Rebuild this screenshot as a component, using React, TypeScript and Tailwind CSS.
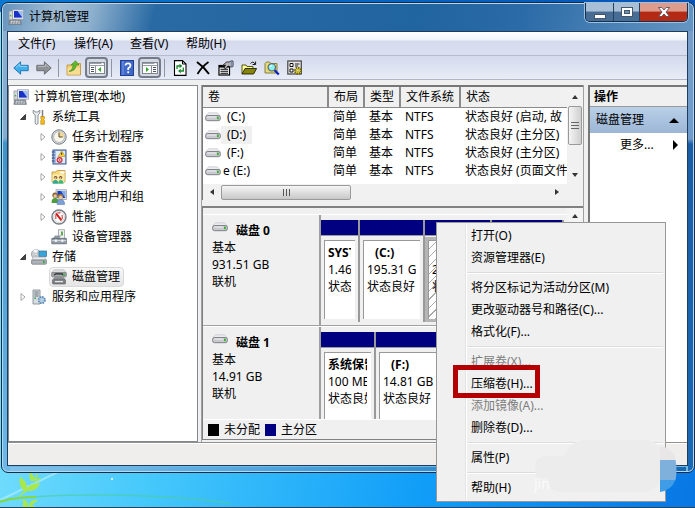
import React from "react";

const ICON = "h-4 w-4 shrink-0";

function ComputerIcon() {
  return (
    <svg viewBox="0 0 16 16" className={ICON} aria-hidden="true">
      <rect x="1" y="2" width="4" height="9" fill="#d3d6d9" stroke="#8a9098" strokeWidth=".7" />
      <rect x="1.8" y="6" width="1.4" height="1.4" fill="#3fae3f" />
      <rect x="4.5" y=".8" width="11" height="9.4" fill="#e9ecef" stroke="#8e98a6" strokeWidth=".7" />
      <rect x="6" y="2" width="8.2" height="6.6" fill="#1830c8" />
      <path d="M9.5 2h4.7v6.600z" fill="#9cc0f6" />
      <path d="M8 10h4.500l1 1.200h-6z" fill="#a7adb5" />
      <path d="M1.500 11h11l1 4.400H.8z" fill="#8b9299" stroke="#646c74" strokeWidth=".5" />
      <path d="M3 12.300h8.500M2.500 14h10" stroke="#e4e7ea" strokeDasharray="1.600 1" />
    </svg>
  );
}
function ToolsIcon() {
  return (
    <svg viewBox="0 0 16 16" className={ICON} aria-hidden="true">
      <path d="M2.2 1v3.2l2 1.6V14q0 1.4 1.4 1.4T7 14V5.8l1.8-1.6V1L7 3H4.2z" fill="#eceff1" stroke="#80878d" strokeWidth=".9" />
      <path d="M11.5 1v7" stroke="#7b8187" strokeWidth="1.5" />
      <path d="M9.8 7.5h3.6v2l-.7 1 .7 1v3.8H9.8v-3.8l.7-1-.7-1z" fill="#f5bc1c" stroke="#b57b09" strokeWidth=".6" />
    </svg>
  );
}
function ClockIcon() {
  return (
    <svg viewBox="0 0 16 16" className={ICON} aria-hidden="true">
      <circle cx="8" cy="8" r="7.2" fill="#d5d8dc" stroke="#777f88" />
      <circle cx="8" cy="8" r="5.4" fill="#f8f6ea" stroke="#a3a8ae" strokeWidth=".7" />
      <path d="M8 8V2.6A5.4 5.4 0 0 1 13.4 8z" fill="#f0d89b" />
      <path d="M8 3.5V8h3.7" fill="none" stroke="#5a4a28" />
    </svg>
  );
}
function EventIcon() {
  return (
    <svg viewBox="0 0 16 16" className={ICON} aria-hidden="true">
      <rect x="2" y="1" width="13" height="14" fill="#a9bfe2" stroke="#3c5c98" />
      <rect x="5" y="2" width="9" height="12" fill="#e3ebf8" />
      <path d="M.8 3h3M.8 6h3M.8 9h3M.8 12h3" stroke="#34487c" strokeWidth="1.2" />
      <path d="M10.7 1.7l3.5 5.8h-7z" fill="#ffd52e" stroke="#a08010" strokeWidth=".5" />
      <path d="M10.7 3.6v2.2" stroke="#222" />
      <circle cx="8.6" cy="11" r="3" fill="#d7303c" />
      <circle cx="8.6" cy="11" r="1.200" fill="none" stroke="#fff" strokeWidth=".8" />
    </svg>
  );
}
function SharedIcon() {
  return (
    <svg viewBox="0 0 16 16" className={ICON} aria-hidden="true">
      <path d="M1 13V3h4l1-1.5h8V13z" fill="#f5d97c" stroke="#bb9436" strokeWidth=".8" />
      <path d="M9 2.5h4.5v2H9z" fill="#fff" />
      <path d="M1.5 5.5h12V13h-12z" fill="#fbe9a5" />
      <circle cx="4.6" cy="8.600" r="1.700" fill="#6c4a2c" />
      <circle cx="9.6" cy="8.600" r="1.700" fill="#6c4a2c" />
      <circle cx="4.4" cy="9.200" r="1.100" fill="#e8b98a" />
      <circle cx="9.4" cy="9.200" r="1.100" fill="#e8b98a" />
      <path d="M1.500 14.800q0-3.800 3-3.800t2.600 3.800z" fill="#35a98f" />
      <path d="M7.200 14.800q0-3.800 2.600-3.800t2.800 3.800z" fill="#42b877" />
    </svg>
  );
}
function UsersIcon() {
  return (
    <svg viewBox="0 0 16 16" className={ICON} aria-hidden="true">
      <rect x="5" y=".8" width="10.4" height="9.6" fill="#dfe4ea" stroke="#8a93a0" strokeWidth=".7" />
      <rect x="6.4" y="2" width="7.8" height="7" fill="#1a3fbc" />
      <path d="M10 2h4.2v7z" fill="#7da9f0" />
      <circle cx="4" cy="6.2" r="2.6" fill="#8a6232" />
      <circle cx="4.2" cy="7" r="1.7" fill="#efc596" />
      <circle cx="9.6" cy="7.6" r="2.6" fill="#a97f34" />
      <circle cx="9.6" cy="8.5" r="1.8" fill="#efc596" />
      <path d="M.5 14q0-5 3.6-5t3.400 5z" fill="#4f9c3e" />
      <path d="M6 15.5q0-5 3.800-5t3.800 5z" fill="#7fa0d6" stroke="#486fbe" strokeWidth=".5" />
    </svg>
  );
}
function PerfIcon() {
  return (
    <svg viewBox="0 0 16 16" className={ICON} aria-hidden="true">
      <circle cx="8" cy="8" r="7" fill="#fff" stroke="#777b80" strokeWidth="1.4" />
      <circle cx="8" cy="8" r="5.4" fill="none" stroke="#c0c4c8" strokeWidth=".8" />
      <path d="M4.800 10V6M11.200 10V6M6.500 3.800h3" stroke="#d2524d" strokeWidth="1.200" />
      <path d="M5 4.400l5.500 7" stroke="#cc1f1c" strokeWidth="2" />
    </svg>
  );
}
function DeviceIcon() {
  return (
    <svg viewBox="0 0 16 16" className={ICON} aria-hidden="true">
      <rect x="7.500" y=".8" width="6" height="9" fill="#f0f2f3" stroke="#8b9196" strokeWidth=".7" />
      <rect x="10" y="2.5" width="2" height="4" fill="#60ad51" />
      <path d="M4 6.500h6l-2 3.500H1.500z" fill="#8f989f" />
      <path d="M.8 9.4h14.6v5.4H.8z" fill="#8f9ba5" stroke="#59636c" strokeWidth=".7" />
      <path d="M1.2 11.7h14" stroke="#dde3e7" />
      <rect x="4" y="10.5" width="1.8" height="2.5" fill="#f5f5f5" />
      <rect x="10.5" y="10.5" width="1.8" height="2.5" fill="#f5f5f5" />
    </svg>
  );
}
function StorageIcon() {
  return (
    <svg viewBox="0 0 16 16" className={ICON} aria-hidden="true">
      <circle cx="5" cy="5.2" r="4.6" fill="#c8ced3" stroke="#888f96" strokeWidth=".7" />
      <path d="M5 5.2L2 1.8A4.6 4.6 0 0 1 7 1z" fill="#f6f7f8" />
      <circle cx="5" cy="5.2" r="1.3" fill="#fff" stroke="#888" strokeWidth=".5" />
      <rect x="8" y="2" width="7.6" height="5.6" fill="#39a3d8" stroke="#3a6f93" strokeWidth=".7" />
      <path d="M2.5 8h11l2 3H.6z" fill="#e9ebed" stroke="#9a9fa4" strokeWidth=".5" />
      <rect x=".6" y="11" width="14.8" height="4.2" rx=".8" fill="#aeb3b8" stroke="#6c7278" strokeWidth=".7" />
      <rect x="12" y="11.8" width="1.6" height="2.4" fill="#27b132" />
    </svg>
  );
}
function DiskMgmtIcon() {
  return (
    <svg viewBox="0 0 16 16" className={ICON} aria-hidden="true">
      <path d="M3 .8h10l2.400 3H.6z" fill="#dcdedf" stroke="#a4a7aa" strokeWidth=".5" />
      <rect x=".6" y="3.6" width="14.8" height="4.200" rx="1" fill="#a5a8ab" stroke="#606468" strokeWidth=".6" />
      <path d="M3 6l2-1.200h6l1 1.200" stroke="#262a2c" strokeWidth="1.200" fill="none" />
      <rect x="12.300" y="4.600" width="1.500" height="2.200" fill="#2fb32f" />
      <path d="M3.500 8h9l2 2.600H1.600z" fill="#8f9295" />
      <rect x="1.500" y="10.400" width="13" height="4.600" rx="1" fill="#7c8084" stroke="#505458" strokeWidth=".6" />
      <path d="M4 12.600h8" stroke="#e6e6e6" strokeWidth="1.300" />
    </svg>
  );
}
function ServicesIcon() {
  return (
    <svg viewBox="0 0 16 16" className={ICON} aria-hidden="true">
      <path d="M2 1h7v14H2z" fill="#d8dde1" stroke="#7a838b" strokeWidth=".8" />
      <path d="M3.3 3h4.4M3.3 5h4.4M3.3 7h4.4" stroke="#6d7780" />
      <rect x="3.4" y="8.4" width="1.6" height="1.6" fill="#39a848" />
      <circle cx="10.8" cy="11" r="3.200" fill="#b9d3ea" stroke="#5f8db6" strokeWidth="1.700" strokeDasharray="1.700 .8" />
      <circle cx="10.8" cy="11" r="1.200" fill="#fff" stroke="#6f98bb" strokeWidth=".6" />
    </svg>
  );
}
function DriveIcon() {
  return (
    <svg viewBox="0 0 16 10" className="h-[10px] w-4 shrink-0" aria-hidden="true">
      <path d="M3.6.8h8.800l2.800 3H.8z" fill="#ececf0" stroke="#bcbcc2" strokeWidth=".6" />
      <rect x=".6" y="3.500" width="14.800" height="5.200" rx="2" fill="#c9c9d0" stroke="#77777f" strokeWidth=".9" />
      <path d="M2.200 5h9" stroke="#eeeef2" />
      <rect x="12" y="4.600" width="1.800" height="2.600" fill="#38b22c" />
    </svg>
  );
}

/* ---- toolbar drawings ---- */
const ArrowShape = ({ left }: { left?: boolean }) => (
  <svg viewBox="0 0 16 14" className="h-[14px] w-4" aria-hidden="true">
    {left ? (
      <path d="M.8 7L7.6.8v3.5h7.6v5.4H7.6v3.5z" fill="#3fb0ee" stroke="#1d6ea8" strokeWidth=".9" />
    ) : (
      <path d="M15.2 7L8.4.8v3.5H.8v5.4h7.6v3.5z" fill="#8e9297" stroke="#63676b" strokeWidth=".9" />
    )}
    <path d={left ? "M3 6.4l3.7-3.3v2.3h7.3" : "M1.9 5.4h7.6V3.1l3.5 3.3"} fill="none" stroke={left ? "#a6def9" : "#c3c6c9"} strokeWidth=".8" />
  </svg>
);
const FolderUp = () => (
  <svg viewBox="0 0 16 16" className={ICON} aria-hidden="true">
    <path d="M1 15V5h4.500L7 3.500h7.500V15z" fill="#f0cc74" stroke="#b98f31" strokeWidth=".8" />
    <path d="M1.600 7.500h12.400v7H1.600z" fill="#f8dd93" />
    <path d="M3 11.500q4-1.500 4.200-6.500H5L9.500.8 13 5h-2.800q-.5 6-7.200 6.500z" fill="#5bbb2b" stroke="#37811a" strokeWidth=".6" />
  </svg>
);
const PanelShape = ({ right }: { right?: boolean }) => (
  <svg viewBox="0 0 16 12" className="h-3 w-4 shrink-0" aria-hidden="true">
    <rect x=".5" y=".5" width="15" height="11" fill="#fff" stroke="#80868f" />
    <path d="M1 1.5h14M1 3.5h14" stroke="#99a0aa" />
    <path d="M12.5 1.5h2" stroke="#fff" />
    <path d={right ? "M9.5 4v7" : "M6.5 4v7"} stroke="#8a919b" />
    <path d={right ? "M11 5.5h3M11 7.5h3M11 9.5h3" : "M2 5.5h3M2 7.5h3M2 9.5h3"} stroke="#4b5563" />
    <path d={right ? "M4 5l3 2.5L4 10z" : "M12 5L9 7.5l3 2.5z"} fill="#31a52c" />
  </svg>
);
const HelpShape = () => (
  <svg viewBox="0 0 16 16" className={ICON} aria-hidden="true">
    <rect x="1.5" y=".5" width="13" height="15" fill="#3f68c8" stroke="#203f8e" />
    <path d="M4 1v14" stroke="#6f92e2" strokeWidth="1.2" />
    <path d="M6.5 5.4Q6.500 3.300 9 3.300t2.500 2.100Q11.500 7 9.200 8.200V10" fill="none" stroke="#fff" strokeWidth="1.7" />
    <rect x="8.3" y="11.3" width="1.8" height="1.8" fill="#fff" />
  </svg>
);
const RefreshShape = () => (
  <svg viewBox="0 0 16 16" className={ICON} aria-hidden="true">
    <path d="M2.500.6h8L14 4v11.400H2.500z" fill="#fff" stroke="#000" strokeWidth="1.100" />
    <path d="M10.500.6V4H14" fill="none" stroke="#000" />
    <path d="M5 9V6h3M11.300 7.500v3.500H8.500" fill="none" stroke="#14862a" strokeWidth="1.300" />
    <path d="M7.500 3.700L10.300 6 7.500 8.200zM8.800 8.800L6 11l2.800 2.300z" fill="#14862a" />
  </svg>
);
const DeleteShape = () => (
  <svg viewBox="0 0 16 16" className={ICON} aria-hidden="true">
    <path d="M2 2q7 5 12 12" fill="none" stroke="#000" strokeWidth="2" />
    <path d="M13.5 2Q7 6.500 2.500 14" fill="none" stroke="#000" strokeWidth="1.7" />
  </svg>
);
const PropsShape = () => (
  <svg viewBox="0 0 16 16" className={ICON} aria-hidden="true">
    <rect x="1" y="5.500" width="10.500" height="9.500" fill="#fff" stroke="#000" strokeWidth="1.200" />
    <path d="M1 6.500h10" stroke="#000" strokeWidth="2.200" />
    <path d="M2.500 9.300h7.500M2.500 11.300h7.500M2.500 13.200h7.500" stroke="#000" strokeWidth="1.100" />
    <path d="M4 6l4.500-4h3l1-1H15v5.500l-2 .5-3-1-2 2.500-2-.5 1.500-3z" fill="#b4b4b4" stroke="#111" strokeWidth=".8" />
    <path d="M12.500 1.400H15v5h-2z" fill="#7b8db0" />
  </svg>
);
const OpenShape = () => (
  <svg viewBox="0 0 16 16" className={ICON} aria-hidden="true">
    <path d="M1 14V5h4l1 1.5h6V9" fill="#ffff9b" stroke="#444400" strokeWidth=".9" />
    <path d="M1 14l3-5.5h11.600l-3 5.500z" fill="#858509" stroke="#222200" strokeWidth=".9" />
    <path d="M9.5 3.500q2.500-3 4.500.5M14.600 1.500v3h-3" fill="none" stroke="#000" strokeWidth=".9" />
  </svg>
);
const SearchShape = () => (
  <svg viewBox="0 0 16 16" className={ICON} aria-hidden="true">
    <path d="M1 13V3.500L2.500 2h3L7 3.500h6V13z" fill="#e6da78" stroke="#77773a" strokeWidth=".9" />
    <circle cx="7.800" cy="7.300" r="3.700" fill="#86f0f2" stroke="#666" strokeWidth="1.200" />
    <path d="M6.300 7q.2-1.500 1.600-1.800" stroke="#fff" fill="none" />
    <path d="M10.600 10.200l4.200 4.300" stroke="#0a1ec4" strokeWidth="2.200" />
  </svg>
);
const SettingsShape = () => (
  <svg viewBox="0 0 16 16" className={ICON} aria-hidden="true">
    <rect x=".8" y="1" width="13.5" height="13" fill="#e4e4e4" stroke="#444" strokeWidth="1.2" />
    <path d="M3 3.500h3v3H3zM3 9h3v3H3z" fill="#fff" stroke="#111" />
    <path d="M8 4h4.500M8 6h3" stroke="#222" strokeWidth="1.2" />
    <circle cx="11" cy="10.7" r="3" fill="#f1e23f" stroke="#6e6400" strokeWidth="2" strokeDasharray="1.5 .8" />
    <circle cx="11" cy="10.7" r="1.1" fill="#fff" stroke="#6e6400" strokeWidth=".5" />
  </svg>
);

type Tool = { label: string; icon: React.ReactNode; pressed?: boolean } | null;
const tools: Tool[] = [
  { label: "后退", icon: <ArrowShape left /> },
  { label: "前进", icon: <ArrowShape /> },
  null,
  { label: "上一级", icon: <FolderUp /> },
  { label: "控制台树", icon: <PanelShape />, pressed: true },
  null,
  { label: "帮助", icon: <HelpShape /> },
  { label: "操作窗格", icon: <PanelShape right />, pressed: true },
  null,
  { label: "刷新", icon: <RefreshShape /> },
  { label: "删除", icon: <DeleteShape /> },
  { label: "属性", icon: <PropsShape /> },
  { label: "打开", icon: <OpenShape /> },
  { label: "查找", icon: <SearchShape /> },
  { label: "设置", icon: <SettingsShape /> },
];

type Node = { text: string; level: 0 | 1 | 2; state?: "open" | "closed"; icon: React.ReactNode; selected?: boolean };
const tree: Node[] = [
  { text: "计算机管理(本地)", level: 0, icon: <ComputerIcon /> },
  { text: "系统工具", level: 1, state: "open", icon: <ToolsIcon /> },
  { text: "任务计划程序", level: 2, state: "closed", icon: <ClockIcon /> },
  { text: "事件查看器", level: 2, state: "closed", icon: <EventIcon /> },
  { text: "共享文件夹", level: 2, state: "closed", icon: <SharedIcon /> },
  { text: "本地用户和组", level: 2, state: "closed", icon: <UsersIcon /> },
  { text: "性能", level: 2, state: "closed", icon: <PerfIcon /> },
  { text: "设备管理器", level: 2, icon: <DeviceIcon /> },
  { text: "存储", level: 1, state: "open", icon: <StorageIcon /> },
  { text: "磁盘管理", level: 2, icon: <DiskMgmtIcon />, selected: true },
  { text: "服务和应用程序", level: 1, state: "closed", icon: <ServicesIcon /> },
];
const indent = ["pl-[3px]", "pl-2", "pl-7"];

function TreeRow({ node }: { node: Node }) {
  return (
    <li className={`flex h-5 items-center ${indent[node.level]}`}>
      {node.level > 0 && (
        <span className="flex w-3 justify-center">
          {node.state && (
            <svg viewBox="0 0 8 8" className="h-2 w-2" aria-hidden="true">
              {node.state === "open" ? (
                <path d="M6.500 1.500v5h-5z" fill="#444" stroke="#111" strokeWidth=".7" />
              ) : (
                <path d="M2 .6L6 4 2 7.400z" fill="#fff" stroke="#9a9a9a" strokeWidth=".9" />
              )}
            </svg>
          )}
        </span>
      )}
      <button
        type="button"
        className={`flex h-5 items-center gap-[5px] whitespace-nowrap rounded-sm border pr-[3px] ${
          node.level > 0 ? "pl-px" : ""
        } ${node.selected ? "border-[#d9d9d9] bg-linear-to-b from-[#f8f8f8] to-[#e5e5e5]" : "border-transparent"}`}
      >
        {node.icon}
        {node.text}
      </button>
    </li>
  );
}

const volumes = [
  { name: "(C:)", status: "状态良好 (启动, 故" },
  { name: "(D:)", status: "状态良好 (主分区)", selected: true },
  { name: "(F:)", status: "状态良好 (主分区)" },
  { name: "e (E:)", status: "状态良好 (页面文件", label: true },
];

const Triangle = ({ d }: { d: string }) => (
  <svg viewBox="0 0 8 8" className="h-2 w-2" aria-hidden="true">
    <path d={d} fill="#333" />
  </svg>
);
const UP = "M1 6l3-4 3 4z";
const DOWN = "M1 2l3 4 3-4z";
const LEFT = "M6 1L2 4l4 3z";
const RIGHT = "M2 1l4 3-4 3z";

function VolumeTable() {
  const th = "border-b border-r-2 border-[#8a8a8a] bg-[#f0f0f0] px-[5px] text-left font-normal whitespace-nowrap";
  return (
    <div className="flex shrink-0 flex-col border-l border-t-2 border-[#777] bg-white">
      <div className="flex h-[97px]">
        <div className="min-w-0 flex-1 overflow-hidden">
          <table className="w-full table-fixed border-collapse">
            <thead>
              <tr className="h-5">
                <th className={`${th} w-[125px]`}>卷</th>
                <th className={`${th} w-[36px]`}>布局</th>
                <th className={`${th} w-[36px]`}>类型</th>
                <th className={`${th} w-[60px]`}>文件系统</th>
                <th className="border-b border-[#8a8a8a] bg-[#f0f0f0] px-[5px] text-left font-normal">状态</th>
              </tr>
            </thead>
            <tbody>
              {volumes.map((v) => (
                <tr key={v.name} className="h-[18px]">
                  <td className="p-0">
                    <div className="flex h-[18px] items-center pl-0.5">
                      <DriveIcon />
                      <span className={`leading-[18px] ${v.label ? "pl-0.5" : "px-1.5"} ${v.selected ? "bg-[#f0f0f0]" : ""}`}>
                        {v.name}
                      </span>
                    </div>
                  </td>
                  <td className="px-[5px] py-0">简单</td>
                  <td className="px-[5px] py-0">基本</td>
                  <td className="px-[5px] py-0">NTFS</td>
                  <td className="overflow-hidden py-0 pl-[5px] pr-0 whitespace-nowrap">{v.status}</td>
                </tr>
              ))}
            </tbody>
          </table>
        </div>
        <div className="flex w-4 shrink-0 flex-col items-center bg-[#f1f1f1]">
          <span className="flex h-[19px] items-center"><Triangle d={UP} /></span>
          <span className="flex h-[39px] w-[14px] flex-col items-center justify-center gap-0.5 rounded-[2px] border border-[#9a9a9a] bg-linear-to-r from-[#f5f5f5] to-[#cfcfcf]">
            <i className="h-px w-2 bg-[#666]" /><i className="h-px w-2 bg-[#666]" /><i className="h-px w-2 bg-[#666]" />
          </span>
          <span className="mt-auto flex h-[19px] items-center"><Triangle d={DOWN} /></span>
        </div>
      </div>
      <div className="flex h-4 items-center bg-[#f1f1f1] pr-[22px]">
        <span className="flex w-[18px] justify-center"><Triangle d={LEFT} /></span>
        <span className="flex h-[15px] w-[130px] items-center justify-center gap-0.5 rounded-[2px] border border-[#9a9a9a] bg-linear-to-b from-[#f5f5f5] to-[#c8c8c8]">
          <i className="h-[7px] w-px bg-[#555]" /><i className="h-[7px] w-px bg-[#555]" /><i className="h-[7px] w-px bg-[#555]" />
        </span>
        <span className="ml-auto"><Triangle d={RIGHT} /></span>
      </div>
    </div>
  );
}

type PartitionProps = { width: string; title?: string; size?: string; status?: string; inset?: boolean; hatched?: boolean };
function Partition({ width, title, size, status, inset, hatched }: PartitionProps) {
  return (
    <div className={`${width} flex shrink-0 flex-col border-r-2 border-[#999]`}>
      <div className="h-4 border-b border-[#999] bg-[#000080]" />
      <div className={`mt-px flex min-h-0 flex-1 p-[3px] ${hatched ? "bg-[#b5b5b5]" : "bg-[#f0f0f0]"}`}>
        <div
          className={`min-w-0 flex-1 border-l border-t border-[#999] pl-[3px] pr-1 pt-[3px] leading-[17px] ${
            hatched ? "bg-[repeating-linear-gradient(135deg,#fff_0,#fff_5px,#aaa_5px,#aaa_6px)]" : "bg-white"
          }`}
        >
          {title && (
            <div className="overflow-hidden whitespace-nowrap">
              <b className={inset ? "pl-2" : ""}>{title}</b>
              <br />
              {size}
              <br />
              {status}
            </div>
          )}
        </div>
      </div>
    </div>
  );
}

function Disk({ name, size, children }: { name: string; size: string; children: React.ReactNode }) {
  return (
    <div className="flex h-28 border-t border-white">
      <div className="w-[118px] shrink-0 border-b border-r-2 border-[#a0a0a0] pl-[9px] pt-[7px] leading-[17px]">
        <div className="flex gap-2 font-bold">
          <DriveIcon />
          {name}
        </div>
        基本
        <br />
        {size}
        <br />
        联机
      </div>
      <div className="flex min-w-0 flex-1 overflow-hidden border-b border-[#a0a0a0] pb-[3px] pt-[5px]">{children}</div>
    </div>
  );
}

const menu: ({ text: string; disabled?: boolean } | null)[] = [
  { text: "打开(O)" },
  { text: "资源管理器(E)" },
  null,
  { text: "将分区标记为活动分区(M)" },
  { text: "更改驱动器号和路径(C)..." },
  { text: "格式化(F)..." },
  null,
  { text: "扩展卷(X)...", disabled: true },
  { text: "压缩卷(H)..." },
  { text: "添加镜像(A)...", disabled: true },
  { text: "删除卷(D)..." },
  null,
  { text: "属性(P)" },
  null,
  { text: "帮助(H)" },
];

function ContextMenu() {
  return (
    <div className="absolute left-[436px] top-[222px] w-[230px] border border-[#979797] bg-[#f0f0f0] p-0.5">
      <div className="bg-[linear-gradient(90deg,transparent_26px,#e2e3e3_26px,#e2e3e3_27px,#fff_27px,#fff_28px,transparent_28px)]">
        {menu.map((m, i) =>
          m ? (
            <button
              key={m.text}
              type="button"
              disabled={m.disabled}
              className={`block h-[22px] w-full pl-8 text-left whitespace-nowrap ${m.disabled ? "text-[#7d7d7d]" : ""}`}
            >
              {m.text}
            </button>
          ) : (
            <div key={i} className="flex h-2 items-center pl-7">
              <div className="h-0.5 w-full border-b border-t border-b-white border-t-[#dcdcdc]" />
            </div>
          )
        )}
      </div>
    </div>
  );
}

function Wallpaper() {
  return (
    <svg viewBox="0 0 230 36" className="absolute bottom-0 left-0 h-9 w-[230px]" aria-hidden="true">
      <path d="M0 29L60 0" stroke="#c9f6ff" strokeWidth="2" opacity=".5" />
      <path d="M0 30Q30 24 100 24T230 32" fill="none" stroke="#49cf9b" strokeWidth="1.5" opacity=".6" />
      <path d="M0 31Q14 26 36 26" fill="none" stroke="#86d841" strokeWidth="2" />
      <path d="M24 20q-6-6-4-14 7 4 7 11 4-5 13-5-3 9-13 8l-8 6q2-4 5-6zM32 11q-4-4-2-10 5 4 4 8zM34 10q0-4 4-8-1 5-2 6l5-1q-2 4-7 3zM23 28q5 1 5 8h-5zM29 33q3-5 9-4l-6 5 3 2h-6z" fill="#a9e84d" />
      <circle cx="112" cy="8" r="1.2" fill="#c7f4ff" />
    </svg>
  );
}

export default function App() {
  return (
    <main className="relative flex h-screen flex-col overflow-hidden border-b border-[#334155] bg-[linear-gradient(100deg,#86e6fd_0%,#45c8fb_30%,#109df8_65%,#0877e4_100%)] pl-px pt-0.5 font-['Noto_Sans','Noto_Sans_CJK_SC',sans-serif] text-xs text-black">
      <div className="absolute inset-x-0 top-0 h-3 bg-linear-to-r from-[#0a78d2] to-[#0753b5]" />
      <Wallpaper />
      <section className="relative mb-[34px] flex min-h-0 flex-1 flex-col rounded-[7px] border border-[#142c48] bg-[linear-gradient(#8cb0d0_0,#83add0_135px,#3e93cb_140px,#6eb9e8_100%)] pr-1.5 pb-1.5 pl-[5px] shadow-[inset_0_0_0_1px_#b7d7ee]">
        <div className="absolute inset-y-px right-px w-[5px] rounded-r-[5px] bg-[linear-gradient(#7b9fc8_0,#6f9aca_135px,#1b5da5_140px,#1b68b4_100%)]" />
        <div className="absolute inset-x-2 bottom-px h-1 bg-linear-to-r from-[#7fc2ea] via-[#3f9cd8] to-[#1767b2]" />
        <div className="absolute inset-x-px top-px h-[27px] rounded-t-[5px] bg-[linear-gradient(105deg,#6594bd_0%,#a1bdd5_8%,#8fb1ce_13%,#2a6aa4_22%,#2064a0_60%,#2b6ba7_75%,#6595c2_100%)]" />

        <header className="relative flex h-7 shrink-0 items-center gap-[5px] pl-px">
          <ComputerIcon />
          <h1 className="text-xs">计算机管理</h1>
          <div className="ml-auto flex h-[19px] self-start overflow-hidden rounded-b-[5px] border border-t-0 border-[#15304f] shadow-[0_0_0_1px_#9ec1df]">
            <button type="button" aria-label="最小化" className="flex w-7 items-center justify-center border-r border-[#24415f] bg-linear-to-b from-[#a9bfd5] from-45% to-[#486d95] to-50%">
              <svg viewBox="0 0 12 5" className="mt-2 h-[5px] w-3"><rect x=".5" y=".5" width="11" height="4" fill="#fff" stroke="#46566a" /></svg>
            </button>
            <button type="button" aria-label="最大化" className="flex w-[26px] items-center justify-center border-r border-[#24415f] bg-linear-to-b from-[#a9bfd5] from-45% to-[#486d95] to-50%">
              <svg viewBox="0 0 12 10" className="h-[10px] w-3"><rect x=".5" y=".5" width="11" height="9" fill="#fff" stroke="#46566a" /><rect x="3.5" y="3.5" width="5" height="3" fill="#6e90b2" stroke="#46566a" /></svg>
            </button>
            <button type="button" aria-label="关闭" className="flex w-[47px] items-center justify-center bg-linear-to-b from-[#dc9b8d] from-45% to-[#b52a14] to-50%">
              <svg viewBox="0 0 12 10" className="h-[10px] w-3"><path d="M.5.5h3.3L6 3 8.2.5h3.3L8 5l3.500 4.500H8.200L6 7 3.800 9.500H.5L4 5z" fill="#fff" stroke="#51434a" strokeWidth=".8" /></svg>
            </button>
          </div>
        </header>

        <div className="relative flex min-h-0 flex-1 flex-col border border-[#1e3d5c] bg-[#f0f0f0]">
          <nav className="flex h-6 shrink-0 border-b border-[#b5bdcc] bg-[linear-gradient(#fff_0,#f0f3fa_8px,#d5daed_9px,#dae0f1_100%)] pl-1">
            {["文件(F)", "操作(A)", "查看(V)", "帮助(H)"].map((m) => (
              <button key={m} type="button" className="w-14 pl-1.5 text-left whitespace-nowrap">{m}</button>
            ))}
          </nav>
          <div role="toolbar" className="flex h-6 shrink-0 items-center border-b border-[#b1b7c8] bg-linear-to-b from-[#d5daed] to-[#e8ecf6] pl-px">
            {tools.map((t, i) =>
              t ? (
                <button
                  key={t.label}
                  type="button"
                  aria-label={t.label}
                  className={`flex h-[21px] w-[23px] items-center justify-center ${t.pressed ? "rounded-[4px] border-2 border-[#747b89] bg-[#d3d8e2]" : ""}`}
                >
                  {t.icon}
                </button>
              ) : (
                <i key={i} className="mx-[3px] h-[18px] w-px bg-[#8e95a3]" />
              )
            )}
          </div>

          <div className="flex min-h-0 flex-1 pt-[5px]">
            <ul className="w-[190px] shrink-0 border border-[#828790] bg-white pt-px">
              {tree.map((n) => <TreeRow key={n.text} node={n} />)}
            </ul>
            <div className="ml-[3px] flex min-w-0 flex-1 flex-col border-r border-l border-[#a0a0a0] pb-0.5">
              <VolumeTable />
              <div className="mt-1.5 flex min-h-0 flex-1 border-b border-l border-t-2 border-[#808080]">
                <div className="flex min-w-0 flex-1 flex-col">
                  <div className="min-h-0 flex-1 overflow-hidden pt-1.5">
                    <Disk name="磁盘 0" size="931.51 GB">
                      <Partition width="w-[39px]" title="SYST" size="1.46" status="状态" />
                      <Partition width="w-[65px]" title="(C:)" size="195.31 G" status="状态良好" inset />
                      <Partition width="w-[67px]" title="  " size="2" status="状" hatched />
                      <Partition width="w-[72px]" />
                    </Disk>
                    <Disk name="磁盘 1" size="14.91 GB">
                      <Partition width="w-[55px]" title="系统保留" size="100 MB" status="状态良好" />
                      <Partition width="w-[188px]" title="(F:)" size="14.81 GB" status="状态良好" inset />
                    </Disk>
                  </div>
                  <div className="flex h-5 shrink-0 items-center border-t border-white pl-[5px]">
                    <i className="mr-[5px] h-3 w-[11px] bg-black" />未分配
                    <i className="mr-[5px] ml-[5px] h-3 w-[11px] bg-[#000080]" />主分区
                  </div>
                </div>
                <div className="flex w-4 shrink-0 justify-center bg-[#f4f4f4] pt-1"><Triangle d={UP} /></div>
              </div>
            </div>
            <aside className="ml-1 w-[99px] shrink-0 border-l-2 border-t-2 border-[#777] bg-white">
              <h2 className="h-5 border-b border-[#999] bg-[#f0f0f0] pl-1 font-bold leading-5">操作</h2>
              <button type="button" className="flex h-[26px] w-full items-center justify-between bg-linear-to-b from-[#bad0e8] to-[#9bb6d5] pr-2 pl-1.5">
                磁盘管理
                <svg viewBox="0 0 10 6" className="h-1.5 w-[10px]" aria-hidden="true"><path d="M0 6l5-5 5 5z" /></svg>
              </button>
              <button type="button" className="flex h-6 w-full items-center justify-between pr-2 pl-[30px]">
                更多...
                <svg viewBox="0 0 6 10" className="h-[10px] w-1.5" aria-hidden="true"><path d="M0 0l5 5-5 5z" /></svg>
              </button>
            </aside>
          </div>
          <footer className="h-[23px] shrink-0 border-t border-[#909090] bg-[#f0eeed] shadow-[inset_0_1px_0_#fff]" />
        </div>
      </section>

      <ContextMenu />
      <div className="absolute left-[453px] top-[365px] h-[33px] w-[87px] border-5 border-[#b40000]" />
      <span className="absolute left-[534px] top-[474px] text-sm leading-5 text-[#fbfbfb]">jin</span>
      <svg viewBox="0 0 148 56" className="absolute left-[532px] top-[438px] h-14 w-[148px]" aria-hidden="true">
        <path d="M128 8q14 2 16 14h-16z" fill="#e9e6e8" />
        <path d="M128 22h15.500q2 10 0 20H128z" fill="#7fb0dc" />
        <path d="M128 42h15.500q-4 10-15.500 12z" fill="#3f9de8" />
        <path d="M3 30q0-12 12-12h18q3-14 18-16h60q12 0 17 8v36q-8 8-20 8H30q-14 0-14-14H6q-3-4-3-10z" fill="#ececec" />
      </svg>
    </main>
  );
}
